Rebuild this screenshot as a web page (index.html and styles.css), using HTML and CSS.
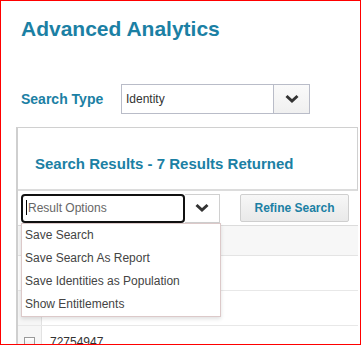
FILE: index.html
```html
<!DOCTYPE html>
<html lang="en">
<head>
    <meta charset="UTF-8">
    <meta name="viewport" content="width=device-width, initial-scale=1.0">
    <title>Advanced Analytics</title>

    <link rel="stylesheet" href="styles.css">
</head>
<body>
    <div class="frame">
        <h1 class="page-title">Advanced Analytics</h1>

        <div class="search-type">
            <label class="field-label">Search Type</label>
            <div class="select-box">
                <span class="select-text">Identity</span>
                <span class="select-btn">
                    <svg width="14" height="10" viewBox="0 0 14 10"><path d="M1.5 2 L7 7 L12.5 2" fill="none" stroke="#333" stroke-width="3"/></svg>
                </span>
            </div>
        </div>

        <div class="results-panel">
            <div class="results-header">
                <h2>Search Results - 7 Results Returned</h2>
            </div>

            <div class="toolbar">
                <div class="options-wrap">
                    <div class="options-select">
                        <span class="options-input"><span class="caret"></span>Result Options</span>
                        <span class="options-btn">
                            <svg width="14" height="10" viewBox="0 0 14 10"><path d="M1.5 2 L7 7 L12.5 2" fill="none" stroke="#333" stroke-width="3"/></svg>
                        </span>
                    </div>
                    <ul class="options-menu">
                        <li>Save Search</li>
                        <li>Save Search As Report</li>
                        <li>Save Identities as Population</li>
                        <li>Show Entitlements</li>
                    </ul>
                </div>
                <button class="refine-btn">Refine Search</button>
            </div>

            <div class="table">
                <div class="table-head"></div>
                <div class="table-row"></div>
                <div class="table-row check-row">
                    <span class="check-cell"></span>
                    <span class="data-cell"></span>
                </div>
                <div class="table-row check-row">
                    <span class="check-cell"><span class="checkbox"></span></span>
                    <span class="data-cell">72754947</span>
                </div>
            </div>
        </div>
    </div>
</body>
</html>
```

FILE: styles.css
```css
body {
    margin: 0;
    font-family: "Liberation Sans", Arial, sans-serif;
    background: #fff;
}

.frame {
    box-sizing: border-box;
    width: 361px;
    height: 345px;
    border: 1px solid #f00;
    padding: 16px 2px 0 15px;
    overflow: hidden;
}

.page-title {
    margin: 0 0 0 5px;
    font-size: 21px;
    line-height: 24px;
    font-weight: bold;
    color: #1b80a4;
}

.search-type {
    display: flex;
    align-items: center;
    margin: 43px 0 0 5px;
}

.field-label {
    width: 100px;
    font-size: 14px;
    font-weight: bold;
    color: #1b80a4;
}

.select-box {
    display: flex;
    width: 189px;
    height: 30px;
    box-sizing: border-box;
    border: 1px solid #b9bcc8;
}

.select-text {
    flex: 1;
    padding-left: 4px;
    font-size: 12px;
    line-height: 28px;
    color: #333;
}

.select-btn {
    width: 35px;
    border-left: 1px solid #b9bcc8;
    background: linear-gradient(#fafafa, #f0f0f0);
    display: flex;
    align-items: center;
    justify-content: center;
}

.results-panel {
    margin-top: 13px;
    border-top: 1px solid #d0d0d0;
    border-left: 2px solid #cfcfcf;
}

.results-header {
    padding: 27px 0 16px 17px;
    border-right: 1px solid #d0d0d0;
    border-bottom: 2px solid #dcdcdc;
}

.results-header h2 {
    margin: 0;
    font-size: 15px;
    line-height: 18px;
    font-weight: bold;
    color: #1b80a4;
}

.toolbar {
    display: flex;
    align-items: center;
    height: 34px;
    padding-left: 3px;
    border-bottom: 1px solid #dcdcdc;
}

.options-wrap {
    position: relative;
}

.options-select {
    display: flex;
    width: 199px;
    height: 29px;
}

.options-input {
    box-sizing: border-box;
    width: 164px;
    border: 2px solid #111;
    border-radius: 4px;
    padding-left: 3px;
    font-size: 12px;
    line-height: 25px;
    color: #666;
}

.caret {
    display: inline-block;
    width: 1px;
    height: 15px;
    margin-right: 1px;
    background: #000;
    vertical-align: -3px;
}

.options-btn {
    flex: 1;
    border: 1px solid #d0d0d0;
    border-left: none;
    display: flex;
    align-items: center;
    justify-content: center;
}

.options-menu {
    position: absolute;
    top: 29px;
    left: 0;
    width: 198px;
    margin: 0;
    padding: 0;
    list-style: none;
    background: #fff;
    border: 1px solid #dcc9c9;
    box-shadow: 0 2px 4px rgba(0, 0, 0, 0.12);
    z-index: 2;
}

.options-menu li {
    padding-left: 3px;
    font-size: 12px;
    line-height: 23px;
    color: #444;
}

.refine-btn {
    margin-left: 20px;
    width: 109px;
    height: 28px;
    border: 1px solid #cfcfcf;
    border-radius: 2px;
    background: linear-gradient(#f7f7f7, #e9e9e9);
    font-family: "Liberation Sans", Arial, sans-serif;
    font-size: 12px;
    font-weight: bold;
    color: #1b80a4;
}

.table-head {
    height: 29px;
    background: #f7f7f7;
    border-bottom: 1px solid #e4e4e4;
}

.table-row {
    display: flex;
    height: 34px;
    border-bottom: 1px solid #e8e8e8;
}

.check-cell {
    width: 24px;
    background: #f6f6f6;
    border-right: 1px solid #e2e2e2;
    display: flex;
    justify-content: center;
    padding-top: 11px;
    box-sizing: border-box;
}

.checkbox {
    width: 11px;
    height: 11px;
    box-sizing: border-box;
    border: 1px solid #9a9a9a;
    background: linear-gradient(#fff, #e6e6e6);
}

.data-cell {
    padding: 9px 0 0 8px;
    font-size: 12px;
    color: #333;
}
```
